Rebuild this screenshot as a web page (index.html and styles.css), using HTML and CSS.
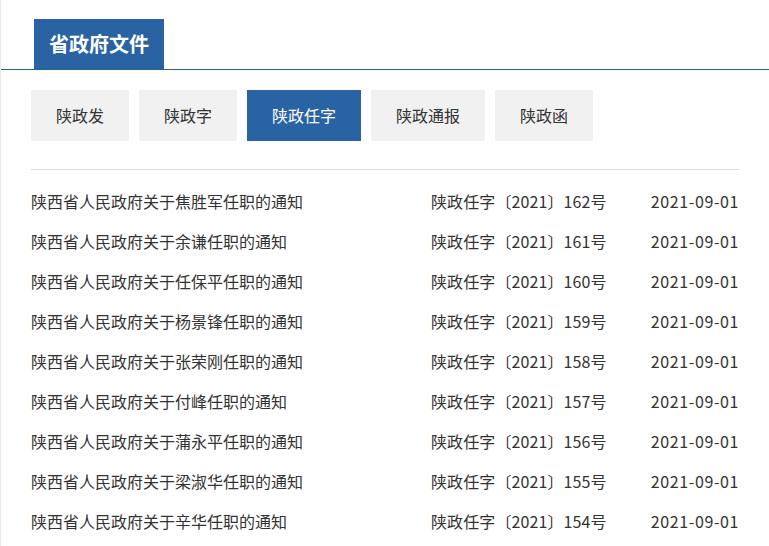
FILE: index.html
```html
<!DOCTYPE html>
<html lang="zh-CN">
<head>
<meta charset="utf-8">
<title>省政府文件</title>
<link rel="stylesheet" href="styles.css">
</head>
<body>
<div class="panel">
  <div class="head"><span class="head-title">省政府文件</span></div>
  <div class="body">
    <div class="tabs">
      <span class="tab">陕政发</span>
      <span class="tab">陕政字</span>
      <span class="tab active">陕政任字</span>
      <span class="tab">陕政通报</span>
      <span class="tab">陕政函</span>
    </div>
    <ul class="list">
      <li class="row"><span class="t">陕西省人民政府关于焦胜军任职的通知</span><span class="n">陕政任字〔2021〕162号</span><span class="d">2021-09-01</span></li>
      <li class="row"><span class="t">陕西省人民政府关于余谦任职的通知</span><span class="n">陕政任字〔2021〕161号</span><span class="d">2021-09-01</span></li>
      <li class="row"><span class="t">陕西省人民政府关于任保平任职的通知</span><span class="n">陕政任字〔2021〕160号</span><span class="d">2021-09-01</span></li>
      <li class="row"><span class="t">陕西省人民政府关于杨景锋任职的通知</span><span class="n">陕政任字〔2021〕159号</span><span class="d">2021-09-01</span></li>
      <li class="row"><span class="t">陕西省人民政府关于张荣刚任职的通知</span><span class="n">陕政任字〔2021〕158号</span><span class="d">2021-09-01</span></li>
      <li class="row"><span class="t">陕西省人民政府关于付峰任职的通知</span><span class="n">陕政任字〔2021〕157号</span><span class="d">2021-09-01</span></li>
      <li class="row"><span class="t">陕西省人民政府关于蒲永平任职的通知</span><span class="n">陕政任字〔2021〕156号</span><span class="d">2021-09-01</span></li>
      <li class="row"><span class="t">陕西省人民政府关于梁淑华任职的通知</span><span class="n">陕政任字〔2021〕155号</span><span class="d">2021-09-01</span></li>
      <li class="row"><span class="t">陕西省人民政府关于辛华任职的通知</span><span class="n">陕政任字〔2021〕154号</span><span class="d">2021-09-01</span></li>
    </ul>
  </div>
</div>
</body>
</html>
```
FILE: styles.css
```css
html, body {
  margin: 0;
  padding: 0;
  background: #fff;
}
body {
  font-family: "Noto Sans CJK SC", "Noto Sans", sans-serif;
  color: #333;
  overflow: hidden;
}
.panel {
  width: 768px;
  height: 546px;
  border-left: 1px solid #e8e8e8;
}
.head {
  padding: 19px 0 0 33px;
  border-bottom: 1px solid #2d5e8e;
  display: flex;
}
.head-title {
  display: block;
  height: 50px;
  line-height: 50px;
  padding: 0 15px;
  background: #2a63a3;
  color: #fff;
  font-size: 20px;
  font-weight: 700;
}
.body {
  padding: 20px 30px 0 30px;
}
.tabs {
  display: flex;
  gap: 10px;
  padding-bottom: 28px;
  border-bottom: 1px solid #dcdcdc;
}
.tab {
  display: block;
  height: 51px;
  line-height: 51px;
  padding: 0 25px;
  background: #f1f1f1;
  font-size: 16px;
  color: #333;
}
.tab.active {
  background: #2a63a3;
  color: #fff;
}
.list {
  list-style: none;
  margin: 0;
  padding: 11px 0 0 0;
}
.row {
  display: grid;
  grid-template-columns: 400px 1fr auto;
  height: 40px;
  line-height: 40px;
  font-size: 16px;
  color: #333;
  white-space: nowrap;
}
.n {
  letter-spacing: 0.1px;
}
.d {
  text-align: right;
  letter-spacing: 0.6px;
}
```
